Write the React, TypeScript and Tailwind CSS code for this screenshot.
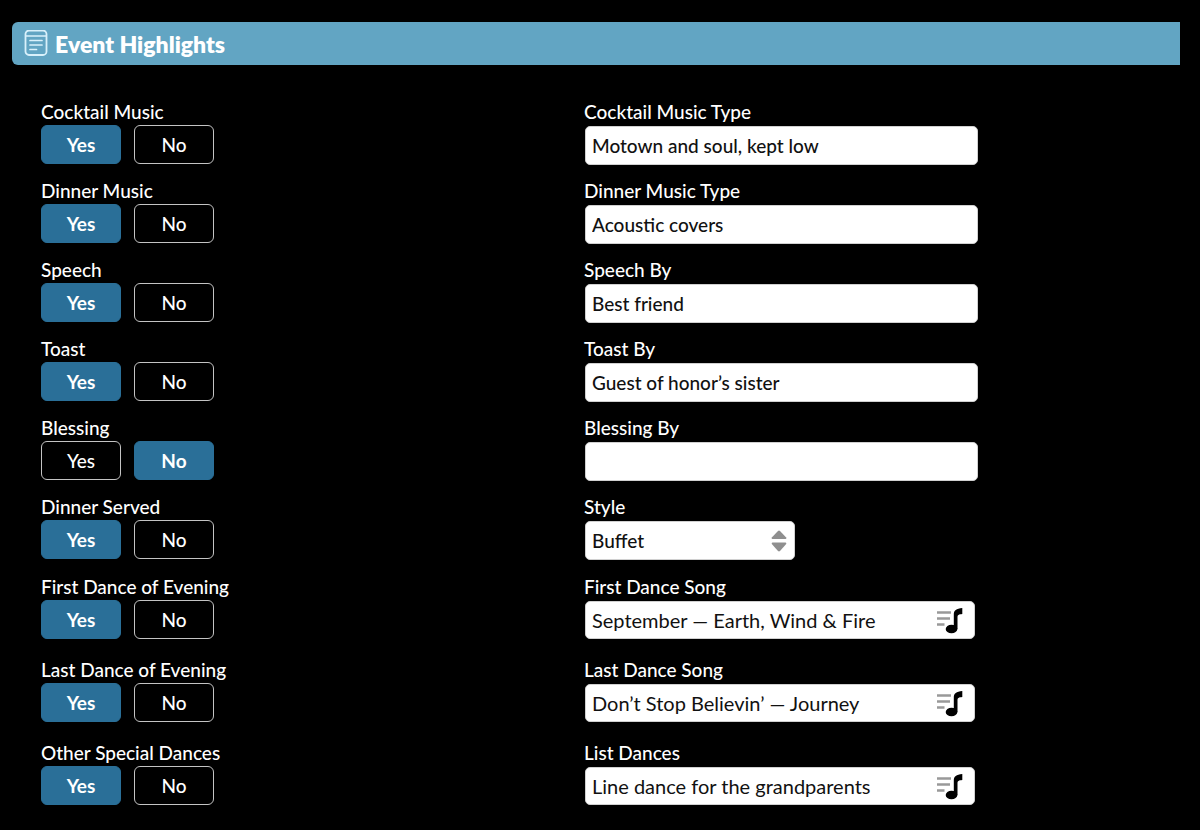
import { useState } from "react";
import type { ReactNode } from "react";
import clsx from "clsx";

type Row = {
  id: string;
  question: string;
  answer: "Yes" | "No";
  detail: string;
  value: string;
  kind?: "select" | "song";
};

const eventRows: Row[] = [
  { id: "cocktail", question: "Cocktail Music", answer: "Yes", detail: "Cocktail Music Type", value: "Motown and soul, kept low" },
  { id: "dinner", question: "Dinner Music", answer: "Yes", detail: "Dinner Music Type", value: "Acoustic covers" },
  { id: "speech", question: "Speech", answer: "Yes", detail: "Speech By", value: "Best friend" },
  { id: "toast", question: "Toast", answer: "Yes", detail: "Toast By", value: "Guest of honor’s sister" },
  { id: "blessing", question: "Blessing", answer: "No", detail: "Blessing By", value: "" },
  { id: "served", question: "Dinner Served", answer: "Yes", detail: "Style", value: "Buffet", kind: "select" },
];

const danceRows: Row[] = [
  { id: "first-dance", question: "First Dance of Evening", answer: "Yes", detail: "First Dance Song", value: "September — Earth, Wind & Fire", kind: "song" },
  { id: "last-dance", question: "Last Dance of Evening", answer: "Yes", detail: "Last Dance Song", value: "Don’t Stop Believin’ — Journey", kind: "song" },
  { id: "other-dances", question: "Other Special Dances", answer: "Yes", detail: "List Dances", value: "Line dance for the grandparents", kind: "song" },
];

/* ── Icons ─────────────────── */
function NotesIcon() {
  return (
    <svg width="24" height="28" viewBox="0 1 24 28" fill="none" stroke="#d9f1fb" strokeLinecap="round" aria-hidden="true">
      <rect x="1.5" y="1.5" width="21" height="24.5" rx="3.5" strokeWidth="1.8" />
      <path d="M2 7h20" strokeWidth="1.6" />
      <path d="M6 11.5h12M6 16h12M6 20.5h6.5" strokeWidth="1.7" />
    </svg>
  );
}

function SongIcon() {
  return (
    <svg className="block" width="28" height="28" viewBox="0 0 28 28" fill="none" aria-hidden="true">
      <path d="M1 6.500h14M1 12.500h13M1 18.500h7.500" stroke="#999" strokeWidth="2.600" />
      <ellipse cx="15.500" cy="23" rx="5.800" ry="4.300" fill="#000" />
      <path d="M17.800 23V8.500c0-4 2.500-6 8.500-6.500V8c-3.600.300-4.800 1-4.800 3.200v12z" fill="#000" />
    </svg>
  );
}

function SortIcon() {
  return (
    <svg
      className="pointer-events-none absolute top-1/2 right-2 -translate-y-1/2"
      width="16"
      height="22"
      viewBox="0 0 16 22"
      fill="#8f8f8f"
      aria-hidden="true"
    >
      <path d="M7 1Q8 .1 9 1L15.200 7.500Q15.800 9 14.500 9H1.500Q.2 9 .8 7.500Z" />
      <path d="M7 21Q8 21.900 9 21L15.200 14Q15.800 12.500 14.500 12.500H1.500Q.2 12.500 .8 14Z" />
    </svg>
  );
}

/* ── Controls ─────────────────── */
function YesNo({ row }: { row: Row }) {
  const [answer, setAnswer] = useState(row.answer);

  return (
    <div role="group" aria-labelledby={`${row.id}-question`}>
      <p id={`${row.id}-question`} className="h-6 whitespace-nowrap">
        {row.question}
      </p>
      <div className="flex gap-[13px]">
        {(["Yes", "No"] as const).map((option) => (
          <button
            key={option}
            type="button"
            aria-pressed={answer === option}
            onClick={() => setAnswer(option)}
            className={clsx(
              "h-[39px] w-20 rounded-md border",
              answer === option
                ? "border-[#2a6f98] bg-[#2a6f98] font-bold"
                : "border-[#c4c4c4] bg-black",
            )}
          >
            {option}
          </button>
        ))}
      </div>
    </div>
  );
}

function Detail({ row }: { row: Row }) {
  const [value, setValue] = useState(row.value);
  const box = "w-full rounded-[5px] border border-[#d0d0d0] bg-white pl-1.5 text-[#111]";
  let control: ReactNode;

  if (row.kind === "select") {
    control = (
      <div className="relative w-[210px]">
        <select
          id={row.id}
          value={value}
          onChange={(e) => setValue(e.target.value)}
          className={clsx(box, "block h-[39px] appearance-none")}
        >
          <option>Buffet</option>
        </select>
        <SortIcon />
      </div>
    );
  } else if (row.kind === "song") {
    control = (
      <div className={clsx(box, "flex h-[38px] max-w-[390px] items-center pr-2.5")}>
        <input
          id={row.id}
          type="text"
          value={value}
          onChange={(e) => setValue(e.target.value)}
          className="h-full min-w-0 flex-1 text-[20px] font-normal outline-none"
        />
        <button type="button" aria-label="Choose song">
          <SongIcon />
        </button>
      </div>
    );
  } else {
    control = (
      <input
        id={row.id}
        type="text"
        value={value}
        onChange={(e) => setValue(e.target.value)}
        className={clsx(box, "block h-[39px] max-w-[393px]")}
      />
    );
  }

  return (
    <div>
      <label htmlFor={row.id} className="block h-[25px]">
        {row.detail}
      </label>
      <div className="pl-px">{control}</div>
    </div>
  );
}

function Rows({ rows, className }: { rows: Row[]; className: string }) {
  return (
    <div className={clsx("grid", className)}>
      {rows.map((row) => (
        <div key={row.id} className="grid h-16 grid-cols-2">
          <YesNo row={row} />
          <Detail row={row} />
        </div>
      ))}
    </div>
  );
}

export default function App() {
  return (
    <main className="min-h-screen bg-black pt-[22px] pr-5 pb-4 pl-3 font-['Lato',sans-serif] text-[19px] leading-[22px] font-medium text-white">
      <header className="flex h-[43px] items-center gap-[7px] rounded-l-md bg-[#62a5c3] pl-3">
        <NotesIcon />
        <h1 className="text-[23px] font-extrabold">Event Highlights</h1>
      </header>
      <form className="pt-9 pr-[53px] pl-[29px]" onSubmit={(e) => e.preventDefault()}>
        <Rows rows={eventRows} className="gap-[15px]" />
        <Rows rows={danceRows} className="mt-4 gap-[19px]" />
      </form>
    </main>
  );
}
